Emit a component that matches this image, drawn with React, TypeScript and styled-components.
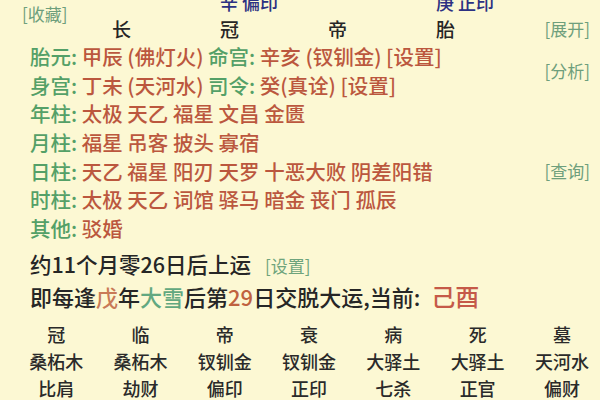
import styled, { createGlobalStyle } from 'styled-components';

const GlobalStyle = createGlobalStyle`
  html, body {
    margin: 0;
    padding: 0;
    background: #fcf8d3;
    overflow: hidden;
  }
  body {
    font-family: "Noto Sans CJK SC", "Noto Sans", sans-serif;
    font-weight: 500;
    color: #262626;
  }
`

const header = ['长', '冠', '帝', '胎'];
const tenGods: { [k: number]: string } = { 1: '辛 偏印', 3: '庚 正印' };

interface InfoRow {
  label: string,
  text: string,
}

const rows: InfoRow[] = [
  { label: '胎元', text: '' },
  { label: '身宫', text: '' },
  { label: '年柱', text: '太极 天乙 福星 文昌 金匮' },
  { label: '月柱', text: '福星 吊客 披头 寡宿' },
  { label: '日柱', text: '天乙 福星 阳刃 天罗 十恶大败 阴差阳错' },
  { label: '时柱', text: '太极 天乙 词馆 驿马 暗金 丧门 孤辰' },
  { label: '其他', text: '驳婚' },
];

const luck = [
  ['冠', '桑柘木', '比肩'],
  ['临', '桑柘木', '劫财'],
  ['帝', '钗钏金', '偏印'],
  ['衰', '钗钏金', '正印'],
  ['病', '大驿土', '七杀'],
  ['死', '大驿土', '正官'],
  ['墓', '天河水', '偏财'],
];

const App = () => {
  return (
    <Page>
      <GlobalStyle />
      <Header>
        <LinkText $area="1 / 1 / 3 / 2" $pad="0 0 6px 22px">[收藏]</LinkText>
        {header.map((h, i) => (
          <TenGod key={'g' + i} $col={i + 2}>{tenGods[i] || ''}</TenGod>
        ))}
        {header.map((h, i) => (
          <Stage key={h} $col={i + 2}>{h}</Stage>
        ))}
        <LinkText $area="2 / 6 / 3 / 7" $pad="0 10px 0 0" $end>[展开]</LinkText>
      </Header>

      <Info>
        {rows.map((r, i) => (
          <Line key={r.label} $row={i + 1}>
            <Label>{r.label}: </Label>
            {i === 0 && (
              <>
                <Value>甲辰 (佛灯火) </Value>
                <Label>命宫: </Label>
                <Value>辛亥 (钗钏金) [设置]</Value>
              </>
            )}
            {i === 1 && (
              <>
                <Value>丁未 (天河水) </Value>
                <Label>司令: </Label>
                <Value>癸(真诠) [设置]</Value>
              </>
            )}
            {i > 1 && <Value>{r.text}</Value>}
          </Line>
        ))}
        <SideLink $row="1 / 3">[分析]</SideLink>
        <SideLink $row="5 / 6">[查询]</SideLink>
      </Info>

      <StartLine>
        约11个月零26日后上运<SmallLink>[设置]</SmallLink>
      </StartLine>
      <CycleLine>
        即每逢<Tone $c="#c97a57">戊</Tone>年<Tone $c="#62a880">大雪</Tone>后第<Tone $c="#c0623f">29</Tone>日交脱大运,当前: <Current>己酉</Current>
      </CycleLine>

      <LuckGrid>
        {luck.map((col) => col.map((t, j) => (
          <LuckCell key={col[0] + j} $row={j + 1}>{t}</LuckCell>
        )))}
      </LuckGrid>
    </Page>
  );
}

export default App;

const Page = styled.div`
  width: 600px;
  height: 400px;
  overflow: hidden;
`

const Header = styled.div`
  display: grid;
  grid-template-columns: 112px repeat(4, 108px) 1fr;
  grid-template-rows: 24px 28px;
  margin-top: -10px;
  align-items: center;
`

const LinkText = styled.div<{ $area: string, $pad: string, $end?: boolean }>`
  grid-area: ${props => props.$area};
  padding: ${props => props.$pad};
  justify-self: ${props => props.$end ? 'end' : 'start'};
  font-size: 17px;
  font-weight: 400;
  color: #6e9f7c;
  white-space: nowrap;
`

const TenGod = styled.div<{ $col: number }>`
  grid-row: 1;
  grid-column: ${props => props.$col};
  font-size: 18px;
  color: #2c3182;
  white-space: nowrap;
`

const Stage = styled.div<{ $col: number }>`
  grid-row: 2;
  grid-column: ${props => props.$col};
  font-size: 19px;
  color: #262626;
`

const Info = styled.div`
  display: grid;
  grid-template-columns: 1fr auto;
  grid-template-rows: repeat(7, 28.6px);
  padding: 0 10px 0 30px;
  align-items: center;
`

const Line = styled.div<{ $row: number }>`
  grid-column: 1;
  grid-row: ${props => props.$row};
  font-size: 20.5px;
  white-space: pre;
`

const Label = styled.span`
  color: #54a067;
`

const Value = styled.span`
  color: #bb573e;
`

const SideLink = styled.div<{ $row: string }>`
  grid-column: 2;
  grid-row: ${props => props.$row};
  font-size: 17px;
  font-weight: 400;
  color: #6e9f7c;
`

const StartLine = styled.div`
  margin-top: 8px;
  padding-left: 30px;
  font-size: 21.5px;
  line-height: 28px;
  color: #262626;
  white-space: pre;
`

const SmallLink = styled.span`
  margin-left: 14px;
  font-size: 17px;
  font-weight: 400;
  color: #6ea47c;
`

const CycleLine = styled.div`
  padding-left: 30px;
  font-size: 22px;
  line-height: 32px;
  color: #262626;
  white-space: pre;
`

const Tone = styled.span<{ $c: string }>`
  color: ${props => props.$c};
`

const Current = styled.span`
  margin-left: 6px;
  font-size: 24px;
  color: #c55a48;
`

const LuckGrid = styled.div`
  display: grid;
  grid-template-columns: repeat(7, 84.3px);
  grid-auto-flow: column;
  grid-template-rows: repeat(3, 27px);
  margin-top: 8px;
  padding-left: 14px;
  align-items: center;
  justify-items: center;
`

const LuckCell = styled.div<{ $row: number }>`
  grid-row: ${props => props.$row};
  font-size: 18px;
  color: #2a2a2a;
`
